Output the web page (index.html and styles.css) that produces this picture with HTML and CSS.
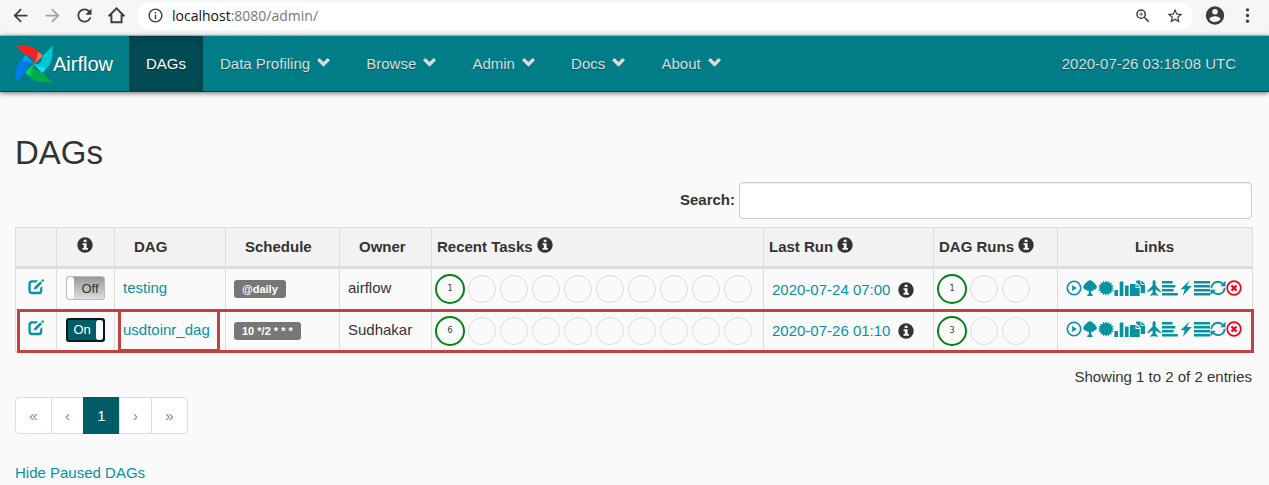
FILE: index.html
```html
<!DOCTYPE html>
<html lang="en">
<head>
<meta charset="utf-8">
<title>Airflow - DAGs</title>
<link rel="stylesheet" href="styles.css">
</head>
<body>
<svg class="defs" aria-hidden="true">
  <symbol id="info" viewBox="0 0 16 16"><circle cx="8" cy="8" r="7.7"/><path fill="#fafafa" d="M6.7 2.700h2.800v2.300H6.700zM5.600 6.200h4v4.900h1.300v1.700H5.500v-1.700h1.300V7.900H5.600z"/></symbol>
  <symbol id="chevron" viewBox="0 0 16 16"><path d="M3.600 3.600 8 8l4.400-4.400 2.500 2.500L8 13 1.100 6.100z"/></symbol>
  <symbol id="edit" viewBox="0 0 16 16"><path d="M10 1.300 8.300 3.400H4.600C3.400 3.400 2.700 4.100 2.700 5.200v5.700c0 1.200.7 1.900 1.900 1.900h5.600c1.200 0 1.900-.7 1.900-1.900V9.100l2.200-2.200v5c0 2-1.400 3.300-3.400 3.300H4c-2.200 0-3.600-1.300-3.600-3.400V4.700C.4 2.600 1.800 1.300 4 1.300zM12.300 2.300l1.800 1.800-5.700 5.600-2.800.9.900-2.700zM13.200 1.400 14.200.4c.4-.4.7-.3 1 0l.7.8c.3.3.3.6 0 .9l-1 1z"/></symbol>
  <symbol id="play" viewBox="0 0 16 16"><circle cx="8" cy="8" r="6.700" fill="none" stroke="currentColor" stroke-width="1.600"/><path d="M6.200 4.900v6.200L10.800 8z"/></symbol>
  <symbol id="tree" viewBox="0 0 16 16"><path d="M8 .3c1.800 0 3 1 3.200 2.300 1.500.1 2.300 1.100 2.200 2.200 1 .5 1.600 1.400 1.400 2.500-.2 1.300-1.300 2.100-2.400 2.200-.8 1.100-2 1.500-3.200 1.200v2.700c.6.5 1 .9 1.500 1.100V16H5.300v-1.500c.6-.2 1-.6 1.500-1.100v-2.700c-1.200.3-2.400-.1-3.200-1.200-1.300-.1-2.300-1-2.400-2.200-.1-1.100.5-2 1.400-2.500-.1-1.100.7-2.100 2.200-2.200C5 1.300 6.200.3 8 .3z"/></symbol>
  <symbol id="certificate" viewBox="0 0 16 16"><path d="m8 .2 1.100 2.200L11 .8l.3 2.500 2.400-.8-.6 2.400 2.500.2-1.600 1.900L16 8l-2 1 1.600 1.900-2.500.2.600 2.400-2.400-.8-.3 2.500-1.900-1.600L8 15.800l-1.100-2.200L5 15.200l-.3-2.500-2.400.8.600-2.400-2.500-.2L2 9 0 8l2-1L.4 5.100l2.500-.2-.6-2.400 2.400.8L5 .8l1.900 1.600z"/></symbol>
  <symbol id="bars" viewBox="0 0 16 16"><path d="M.4 10.500q0-.6.6-.6h2.400q.6 0 .6.600V16H.4zM5.700 2q0-.6.6-.6h2.500q.6 0 .6.600v14H5.700zM11 6q0-.6.600-.6H14q.6 0 .6.600v10H11z"/></symbol>
  <symbol id="duplicate" viewBox="0 0 16 16"><path d="M0 4h5.600v4h4.100v8H0zM6.500 3.900 9.600 7H6.500zM6.200.5h4.300v4.200H15V13h-4.300V6.800L7.200 3.100h-1zM11.400.4 15 3.900h-3.600z"/></symbol>
  <symbol id="plane" viewBox="0 0 16 16"><path d="M8.100 0c.9 0 1.500 1 1.500 2.400v3l4.900 5.300c.4.500.5.900.4 1.900L9.600 9.400v3.300l2.200 2V16L8.900 14.900 8.100 16l-.8-1.100L4.400 16v-1.300l2.200-2V9.400l-5.300 3.200c-.1-1 0-1.400.4-1.900l4.900-5.300v-3C6.600 1 7.200 0 8.100 0z"/></symbol>
  <symbol id="align-left" viewBox="0 0 16 16"><path d="M0 1h10.600v2.400H0zM0 5h13.300v2.400H0zM0 9h11.600v2.400H0zM0 13h15.800v2.400H0z"/></symbol>
  <symbol id="flash" viewBox="0 0 16 16"><path d="M11.800.3 8.800 6h4.900L4.800 15.800l2-6.500H2.600z"/></symbol>
  <symbol id="align-justify" viewBox="0 0 16 16"><path d="M0 1h16v2.400H0zM0 5h16v2.400H0zM0 9h16v2.400H0zM0 13h16v2.400H0z"/></symbol>
  <symbol id="refresh" viewBox="0 0 16 16"><path fill="none" stroke="currentColor" stroke-width="1.900" d="M1.300 8.200c.1-3.700 3-6.400 6.700-6.400 2.200 0 4 .9 5.300 2.500M14.700 7.800c-.1 3.700-3 6.400-6.700 6.400-2.200 0-4-.9-5.300-2.500"/><path d="M15.500.8v5.400h-5.400zM.5 15.200V9.800h5.400z"/></symbol>
  <symbol id="remove" viewBox="0 0 16 16"><circle cx="8" cy="8" r="6.800" fill="none" stroke="currentColor" stroke-width="1.700"/><path fill="none" stroke="currentColor" stroke-width="2.200" d="m5.500 5.500 5 5m0-5-5 5"/></symbol>
</svg>

<div class="browser">
  <button class="tool" aria-label="Back"><svg viewBox="0 0 24 24"><path d="M20 11H7.830l5.590-5.590L12 4l-8 8 8 8 1.410-1.410L7.830 13H20z"/></svg></button>
  <button class="tool faded" aria-label="Forward"><svg viewBox="0 0 24 24"><path d="m12 4-1.410 1.410L16.170 11H4v2h12.170l-5.580 5.590L12 20l8-8z"/></svg></button>
  <button class="tool" aria-label="Reload"><svg viewBox="0 0 24 24"><path d="M17.650 6.350A7.958 7.958 0 0 0 12 4c-4.420 0-7.990 3.580-7.990 8s3.570 8 7.990 8c3.730 0 6.840-2.550 7.730-6h-2.080A5.990 5.990 0 0 1 12 18c-3.310 0-6-2.690-6-6s2.690-6 6-6c1.660 0 3.140.690 4.220 1.780L13 11h7V4z"/></svg></button>
  <button class="tool" aria-label="Home"><svg viewBox="0 0 24 24"><path fill="none" stroke="currentColor" stroke-width="2.200" d="M3 12.800 12 3.800l9 9M6.200 11v8.800h11.600V11"/></svg></button>
  <div class="address">
    <svg class="site" viewBox="0 0 24 24"><path d="M11 7h2v2h-2zm0 4h2v6h-2zm1-9a10 10 0 1 0 0 20 10 10 0 0 0 0-20zm0 18a8 8 0 1 1 0-16 8 8 0 0 1 0 16z"/></svg>
    <span class="url"><b>localhost</b>:8080/admin/</span>
    <button class="tool small" aria-label="Zoom"><svg viewBox="0 0 24 24"><path d="M15.500 14h-.79l-.28-.27A6.470 6.470 0 0 0 16 9.500 6.500 6.500 0 1 0 9.500 16c1.610 0 3.090-.59 4.230-1.570l.27.280v.79l5 4.990L20.490 19zm-6 0a4.500 4.500 0 1 1 0-9 4.500 4.500 0 0 1 0 9zM12 10h-2v2H9v-2H7V9h2V7h1v2h2z"/></svg></button>
    <button class="tool small" aria-label="Bookmark"><svg viewBox="0 0 24 24"><path d="m22 9.240-7.190-.62L12 2 9.190 8.630 2 9.240l5.460 4.730L5.820 21 12 17.270 18.180 21l-1.630-7.030zM12 15.400l-3.760 2.270 1-4.280-3.320-2.880 4.380-.38L12 6.100l1.710 4.040 4.380.38-3.320 2.880 1 4.280z"/></svg></button>
  </div>
  <button class="tool" aria-label="Profile"><svg class="profile" viewBox="0 0 24 24"><path d="M12 2a10 10 0 1 0 0 20 10 10 0 0 0 0-20zm0 3a3 3 0 1 1 0 6 3 3 0 0 1 0-6zm0 14.200a7.200 7.200 0 0 1-6-3.220c.03-1.990 4-3.080 6-3.080s5.970 1.090 6 3.080a7.200 7.200 0 0 1-6 3.220z"/></svg></button>
  <button class="tool" aria-label="Menu"><svg viewBox="0 0 24 24"><circle cx="12" cy="5.500" r="1.900"/><circle cx="12" cy="12" r="1.900"/><circle cx="12" cy="18.500" r="1.900"/></svg></button>
</div>

<nav class="navbar">
  <a class="brand" href="#"><svg class="logo" viewBox="0 0 38 38">
    <defs><path id="blade" d="M.5.500C9 0 19 1 23.500 6.500L27.500 11 19 19.200C19.500 15 18.500 12.500 15.500 11.500 9 10.500 7 6 .5.500z"/><path id="fold" d="M22.500 7.500c2 .2 4.500 1.500 5.300 3.500L19 19.200c2-3.700 3.500-7.200 3.500-11.700z"/></defs>
    <use href="#blade" fill="#00c7d4" transform="rotate(90 19 19)"/><use href="#fold" fill="#11e1ee" transform="rotate(90 19 19)"/>
    <use href="#blade" fill="#00ad46" transform="rotate(180 19 19)"/><use href="#fold" fill="#04d659" transform="rotate(180 19 19)"/>
    <use href="#blade" fill="#017cee" transform="rotate(270 19 19)"/><use href="#fold" fill="#00a7ee" transform="rotate(270 19 19)"/>
    <use href="#blade" fill="#ff2020"/><use href="#fold" fill="#ff7557"/>
  </svg>Airflow</a>
  <ul class="menu">
    <li><a class="active" href="#">DAGs</a></li>
    <li><a href="#">Data Profiling <svg class="icon"><use href="#chevron"/></svg></a></li>
    <li><a href="#">Browse <svg class="icon"><use href="#chevron"/></svg></a></li>
    <li><a href="#">Admin <svg class="icon"><use href="#chevron"/></svg></a></li>
    <li><a href="#">Docs <svg class="icon"><use href="#chevron"/></svg></a></li>
    <li><a href="#">About <svg class="icon"><use href="#chevron"/></svg></a></li>
  </ul>
  <a class="clock" href="#">2020-07-26 03:18:08 UTC</a>
</nav>

<main class="page">
  <h2>DAGs</h2>
  <div class="search"><label for="search">Search:</label><input id="search" type="text"></div>
  <table class="dags">
    <colgroup><col class="c-edit"><col class="c-toggle"><col class="c-dag"><col class="c-schedule"><col class="c-owner"><col><col class="c-last"><col class="c-runs"><col class="c-links"></colgroup>
    <thead><tr>
      <th></th>
      <th class="center"><svg class="icon"><use href="#info"/></svg></th>
      <th class="sortable">DAG</th><th class="sortable">Schedule</th><th class="sortable">Owner</th>
      <th>Recent Tasks <svg class="icon"><use href="#info"/></svg></th>
      <th>Last Run <svg class="icon"><use href="#info"/></svg></th>
      <th>DAG Runs <svg class="icon"><use href="#info"/></svg></th>
      <th class="center">Links</th>
    </tr></thead>
    <tbody>
      <tr>
        <td class="center"><a href="#" aria-label="Edit"><svg class="icon"><use href="#edit"/></svg></a></td>
        <td class="center"><label class="toggle"><input type="checkbox"><span>Off</span></label></td>
        <td><a href="#">testing</a></td>
        <td><a class="badge" href="#">@daily</a></td>
        <td>airflow</td>
        <td class="states"><div class="circles"><i class="done">1</i><i></i><i></i><i></i><i></i><i></i><i></i><i></i><i></i><i></i></div></td>
        <td class="last"><a href="#">2020-07-24 07:00</a><svg class="icon"><use href="#info"/></svg></td>
        <td class="states"><div class="circles"><i class="done">1</i><i></i><i></i></div></td>
        <td class="states"><div class="links">
          <a href="#" aria-label="Trigger"><svg class="icon"><use href="#play"/></svg></a><a href="#" aria-label="Tree view"><svg class="icon"><use href="#tree"/></svg></a><a href="#" aria-label="Graph view"><svg class="icon"><use href="#certificate"/></svg></a><a href="#" aria-label="Duration"><svg class="icon"><use href="#bars"/></svg></a><a href="#" aria-label="Tries"><svg class="icon"><use href="#duplicate"/></svg></a><a href="#" aria-label="Landing times"><svg class="icon"><use href="#plane"/></svg></a><a href="#" aria-label="Gantt"><svg class="icon"><use href="#align-left"/></svg></a><a href="#" aria-label="Code"><svg class="icon"><use href="#flash"/></svg></a><a href="#" aria-label="Logs"><svg class="icon"><use href="#align-justify"/></svg></a><a href="#" aria-label="Refresh"><svg class="icon"><use href="#refresh"/></svg></a><a class="danger" href="#" aria-label="Delete"><svg class="icon"><use href="#remove"/></svg></a>
        </div></td>
      </tr>
      <tr class="marked">
        <td class="center"><a href="#" aria-label="Edit"><svg class="icon"><use href="#edit"/></svg></a><span class="mark mark-row"></span></td>
        <td class="center"><label class="toggle on"><input type="checkbox" checked><span>On</span></label></td>
        <td class="anchor"><a href="#">usdtoinr_dag</a><span class="mark mark-cell"></span></td>
        <td><a class="badge" href="#">10 */2 * * *</a></td>
        <td>Sudhakar</td>
        <td class="states"><div class="circles"><i class="done">6</i><i></i><i></i><i></i><i></i><i></i><i></i><i></i><i></i><i></i></div></td>
        <td class="last"><a href="#">2020-07-26 01:10</a><svg class="icon"><use href="#info"/></svg></td>
        <td class="states"><div class="circles"><i class="done">3</i><i></i><i></i></div></td>
        <td class="states"><div class="links">
          <a href="#" aria-label="Trigger"><svg class="icon"><use href="#play"/></svg></a><a href="#" aria-label="Tree view"><svg class="icon"><use href="#tree"/></svg></a><a href="#" aria-label="Graph view"><svg class="icon"><use href="#certificate"/></svg></a><a href="#" aria-label="Duration"><svg class="icon"><use href="#bars"/></svg></a><a href="#" aria-label="Tries"><svg class="icon"><use href="#duplicate"/></svg></a><a href="#" aria-label="Landing times"><svg class="icon"><use href="#plane"/></svg></a><a href="#" aria-label="Gantt"><svg class="icon"><use href="#align-left"/></svg></a><a href="#" aria-label="Code"><svg class="icon"><use href="#flash"/></svg></a><a href="#" aria-label="Logs"><svg class="icon"><use href="#align-justify"/></svg></a><a href="#" aria-label="Refresh"><svg class="icon"><use href="#refresh"/></svg></a><a class="danger" href="#" aria-label="Delete"><svg class="icon"><use href="#remove"/></svg></a>
        </div></td>
      </tr>
    </tbody>
  </table>
  <p class="summary">Showing 1 to 2 of 2 entries</p>
  <ul class="pagination">
    <li><a class="wide" href="#">«</a></li><li><a href="#">‹</a></li><li><a class="wide current" href="#">1</a></li><li><a href="#">›</a></li><li><a class="wide" href="#">»</a></li>
  </ul>
  <a class="hide" href="#">Hide Paused DAGs</a>
</main>
</body>
</html>
```
FILE: styles.css
```css
* { box-sizing: border-box; }
body { margin: 0; background: #fafafa; color: #333; font: 15px/21px "Liberation Sans", Arial, sans-serif; }
a { color: #0593a2; text-decoration: none; }
svg { fill: currentColor; }
.defs { position: absolute; width: 0; height: 0; }
.icon { width: 16px; height: 16px; vertical-align: -1px; }

.browser { display: flex; align-items: center; gap: 10px; height: 36px; padding: 0 11px 4px 9px; background: #f6f6f6; border-bottom: 1px solid #c8c8c8; color: #3c3c3c; }
.tool { display: flex; align-items: center; justify-content: center; width: 22px; height: 22px; padding: 0; border: 0; background: none; color: inherit; }
.tool svg { width: 21px; height: 21px; }
.tool .profile { width: 23px; height: 23px; }
.faded { color: #a3a3a3; }
.small svg { width: 18px; height: 18px; }
.address { flex: 1; display: flex; align-items: center; gap: 10px; height: 28px; padding: 0 7px 0 10px; margin-right: 1px; border-radius: 14px; background: #fff; }
.site { width: 17px; height: 17px; }
.url { flex: 1; margin-left: -2px; font: 14px/20px "Open Sans", "Noto Sans", sans-serif; color: #777; }
.url b { font-weight: 400; color: #111; }

.navbar { display: flex; align-items: stretch; height: 56px; padding: 0 33px 0 15px; background: #017d87; border-bottom: 1px solid #02464d; box-shadow: 0 1px 5px rgba(0, 0, 0, .6); line-height: 56px; }
.navbar a { color: #dcdcdc; text-shadow: 0 1px 1px rgba(0, 0, 0, .3); }
.navbar .brand { display: flex; align-items: center; width: 114px; font-size: 20px; color: #fff; }
.logo { width: 38px; height: 38px; }
.menu { flex: 1; display: flex; margin: 0; padding: 0; list-style: none; }
.menu a { display: block; padding: 0 17px; }
.menu .icon { width: 15px; margin: 0 1px 0 2px; }
.navbar .active { background: #014c54; color: #fff; box-shadow: inset 0 3px 9px rgba(0, 0, 0, .2); }

.page { padding: 40px 16px 0 15px; }
h2 { margin: 0 0 9px; font-size: 33px; line-height: 41px; font-weight: 400; }
.search { display: flex; align-items: center; justify-content: flex-end; gap: 4px; margin-bottom: 8px; padding-right: 1px; font-weight: 700; }
.search label { padding-bottom: 2px; }
.search input { width: 513px; height: 37px; padding: 8px 12px; border: 1px solid #ccc; border-radius: 4px; background: #fff; font: inherit; box-shadow: inset 0 1px 1px rgba(0, 0, 0, .075); }

.dags { width: 100%; table-layout: fixed; border-collapse: collapse; }
.c-edit { width: 41px; } .c-toggle { width: 58px; } .c-dag { width: 111px; } .c-schedule { width: 114px; } .c-owner { width: 92px; }
.c-last { width: 170px; } .c-runs { width: 124px; } .c-links { width: 195px; }
.dags th { height: 40px; padding: 0 5px 2px; background: #f2f2f2; border: 1px solid #ddd; border-bottom: 3px solid #ddd; text-align: left; white-space: nowrap; }
.dags td { height: 42px; padding: 0 8px 3px; border: 1px solid #ddd; white-space: nowrap; }
.dags .sortable { padding-left: 19px; }
.dags .center { padding: 0 1px 2px 0; text-align: center; }
.dags .states { padding: 0 0 0 3px; }
.dags .last { padding-bottom: 0; }
.badge { display: inline-block; padding: 0 8px; border-radius: 3px; background: #777; color: #fff; font-size: 11px; line-height: 18px; font-weight: 700; }
.toggle { position: relative; display: inline-flex; align-items: center; justify-content: flex-end; width: 39px; height: 24px; padding-right: 5px; border: 1px solid #bbb; border-radius: 3px; background: linear-gradient(#999, #ddd); font-size: 13px; vertical-align: middle; }
.toggle input { position: absolute; inset: 0; margin: 0; appearance: none; }
.toggle::before { content: ""; position: absolute; top: 0; bottom: 0; left: 0; width: 7px; border-radius: 3px; background: #fff; }
.toggle.on { padding: 0 0 0 6px; justify-content: flex-start; border: 2px solid #001a1e; background: #005c66; color: #fff; }
.toggle.on::before { left: auto; right: 0; }
.circles { display: flex; align-items: center; gap: 2px; }
.circles i { width: 28px; height: 28px; margin: 1px; border: 1px solid #ddd; border-radius: 50%; font: 8px/26px "DejaVu Sans", sans-serif; text-align: center; }
.circles .done { width: 30px; height: 30px; margin: 0; border: 2px solid #078019; }
.last .icon { margin-left: 8px; vertical-align: -3px; }
.links { display: flex; padding: 0 0 3px 5px; }
.links a { display: flex; }
.links .danger { color: #f5001d; }

.marked { position: relative; }
.anchor { position: relative; }
.mark { position: absolute; pointer-events: none; border: 3px solid #c24141; }
.mark-row { inset: -1px -1px -1px 1px; }
.mark-cell { inset: -1px 5px -1px 3px; }

.summary { margin: 14px 0 10px; padding-right: 1px; text-align: right; }
.pagination { display: flex; margin: 0 0 28px; padding: 0; list-style: none; }
.pagination a { display: block; margin-left: -1px; padding: 8px 13px; border: 1px solid #ddd; background: #fff; color: #888; text-align: center; line-height: 19px; }
.pagination .wide { min-width: 37px; }
.pagination li:first-child a { margin-left: 0; border-radius: 4px 0 0 4px; }
.pagination li:last-child a { border-radius: 0 4px 4px 0; }
.pagination .current { background: #005c66; border-color: #005c66; color: #fff; }
```
